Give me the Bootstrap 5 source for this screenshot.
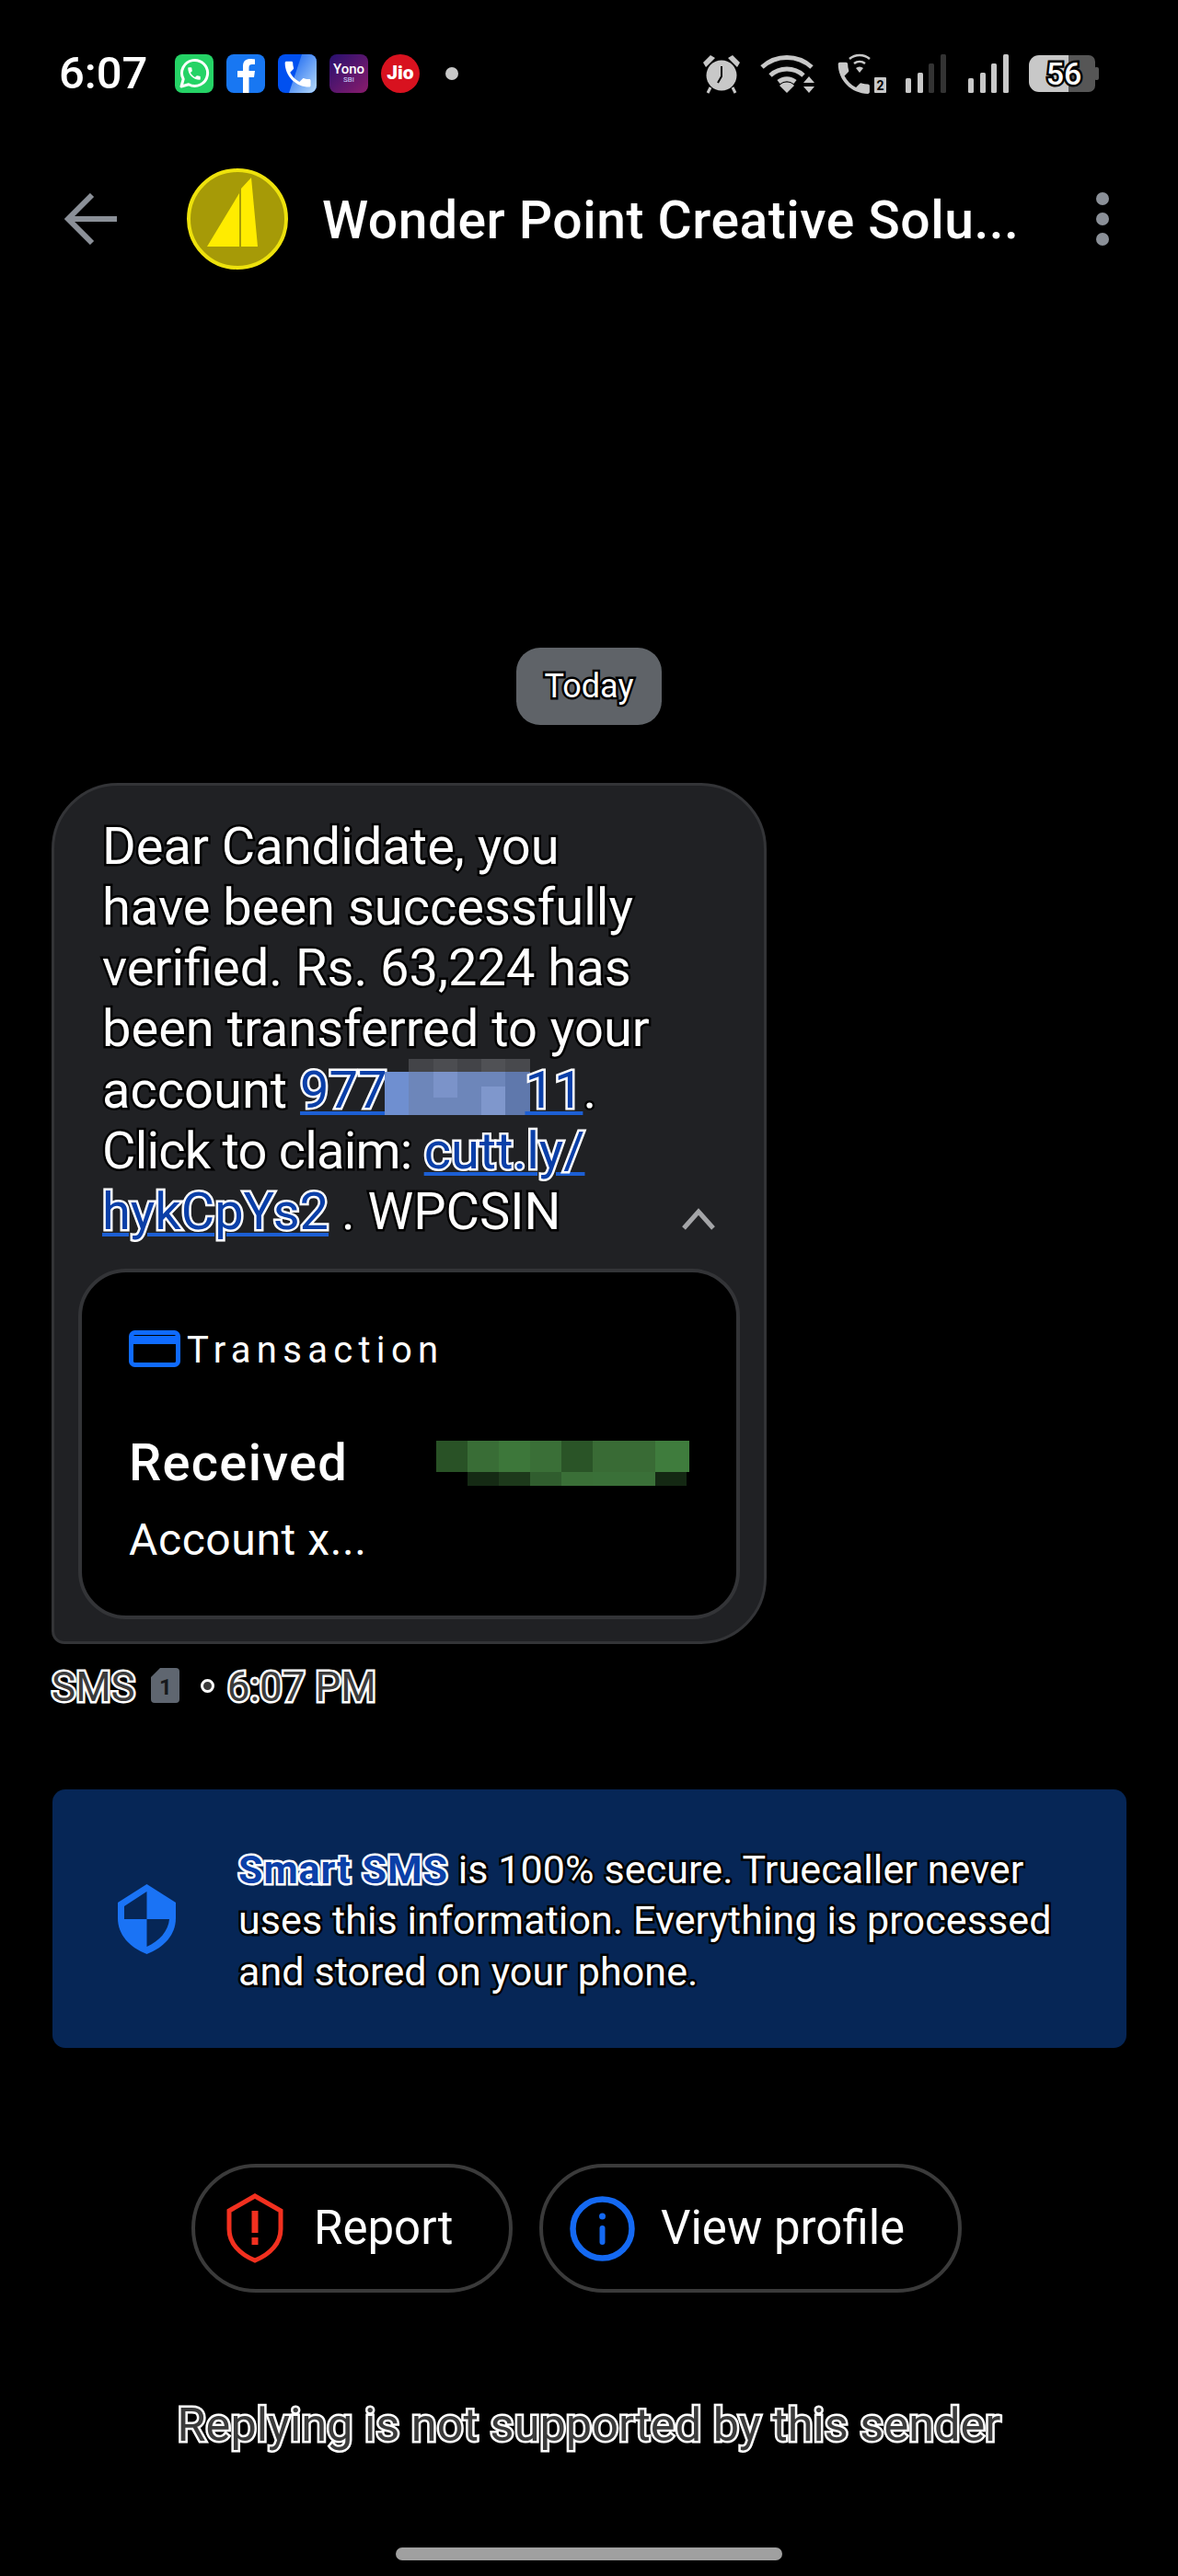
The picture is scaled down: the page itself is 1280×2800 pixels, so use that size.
<!DOCTYPE html>
<html lang="en">
<head>
<meta charset="UTF-8" />
<meta name="viewport" content="width=device-width, initial-scale=1.0" />
<title>Messages</title>
<link rel="stylesheet" href="https://cdn.jsdelivr.net/npm/bootstrap@5.3.0/dist/css/bootstrap.min.css" />
<style>
  body { background: #000; color: #fff; font-family: Roboto, "Liberation Sans", sans-serif; height: 2800px; overflow: hidden; }
  .hc-white { color: #fff; -webkit-text-stroke: 5px #000; paint-order: stroke fill; }
  .hc-ghost { color: #3b3b3b; -webkit-text-stroke: 5px #fff; paint-order: stroke fill; }
  .hc-link { color: #0a3fa8; -webkit-text-stroke: 5px #fff; paint-order: stroke fill; text-decoration: underline; text-decoration-color: #1c5fd4; text-decoration-thickness: 4px; text-underline-offset: 4px; }
  .hc-tight { letter-spacing: -.8px; }
  .smart-name { text-decoration: none; font-weight: 700; letter-spacing: .95px; }

  .status-row { margin-top: 58px; height: 43px; padding: 0 85px 0 64px; }
  .clock { font-size: 49px; font-weight: 500; line-height: 43px; width: 126px; }
  .app-ico { width: 42px; height: 42px; border-radius: 8px; margin-right: 14px; overflow: hidden; flex: none; }
  .ico-wa { background: #25d366; }
  .ico-fb { background: #1877f2; }
  .ico-tc { background: #0050f0; }
  .yono { background: linear-gradient(135deg, #27106f, #8a1c6c); line-height: 1; }
  .yono b { font-size: 15px; font-weight: 500; }
  .yono i { font-size: 8px; font-style: normal; color: #cfd8ff; }
  .jio { width: 42px; border-radius: 50%; background: #d8121f; font-size: 21px; font-weight: 900; margin-right: 28px; }
  .note-dot { width: 14px; height: 14px; background: #c8c8c8; border-radius: 50%; }
  .sys-icons { gap: 20px; }

  .top-bar { margin-top: 82px; height: 110px; padding-left: 70px; }
  .avatar { margin-left: 75px; }
  .top-title { font-size: 57px; font-weight: 500; margin: 3px 0 0 37px; width: 760px; letter-spacing: .5px; white-space: nowrap; }
  .kebab { gap: 8px; margin-left: 81px; }
  .kebab span { width: 14px; height: 14px; border-radius: 50%; background: #8b9098; }

  .today-pill { margin: 411px 0 0 561px; width: 158px; height: 84px; background: #5f6368; border-radius: 26px; font-size: 36px; }
  .bubble { margin: 63px 0 0 56px; width: 777px; height: 936px; background: #202124; border: 3px solid #333437; border-radius: 72px 72px 72px 14px; padding: 33px 26px 0; position: relative; }
  .bubble-text { font-size: 56px; line-height: 66px; padding-left: 26px; height: 462px; white-space: nowrap; }
  .pix-inline { vertical-align: -8px; margin: 0 -6px 0 -2px; }
  .fold { position: absolute; right: 53px; top: 459px; }
  .tx-card { margin-top: 30px; height: 381px; background: #000; border: 4px solid #333437; border-radius: 52px; padding: 61px 51px 0; }
  .tx-head { font-size: 40px; letter-spacing: 6.3px; gap: 7px; line-height: 40px; }
  .tx-head span { margin-top: 4px; }
  .tx-main { margin-top: 78px; height: 49px; }
  .tx-title { font-size: 56px; font-weight: 500; line-height: 49px; letter-spacing: 1.3px; }
  .tx-sub { font-size: 48px; margin-top: 31px; line-height: 56px; letter-spacing: .6px; }

  .meta-row { margin: 26px 0 0 56px; height: 38px; font-size: 44px; }
  .meta-row span { position: relative; top: 2px; }
  .sim-ico { margin: 0 23px 0 17px; }
  .meta-row .meta-dot { width: 15px; height: 15px; border: 3px solid #fff; border-radius: 50%; background: #3b3b3b; margin-right: 14px; top: 0; }

  .secure { margin: 94px 0 0 57px; width: 1167px; height: 281px; background: #062656; border-radius: 14px; padding-left: 71px; gap: 68px; }
  .secure-text { font-size: 43px; line-height: 55.5px; white-space: nowrap; letter-spacing: .1px; padding-top: 5px; }
  .shield-cut { fill: #062656; }

  .act-row { margin-top: 126px; padding-left: 208px; gap: 29px; }
  .act-btn { height: 140px; border: 4px solid #3a3a3a; border-radius: 70px; color: #fff; font-size: 51px; background: none; padding: 0; }
  .act-btn:hover { color: #fff; border-color: #3a3a3a; }
  .act-report { width: 349px; padding-left: 34px; gap: 33px; }
  .act-view { width: 459px; padding-left: 29px; gap: 28px; }

  .no-reply { margin-top: 116px; font-size: 50.5px; text-align: center; line-height: 56px; }
  .home-bar { margin: 105px 0 0 430px; width: 420px; height: 14px; border-radius: 7px; background: #a0a0a0; }
</style>
</head>
<body>
  <!-- status bar -->
  <div class="status-row d-flex align-items-center">
    <div class="clock">6:07</div>
    <div class="app-ico ico-wa d-flex align-items-center justify-content-center">
      <svg width="34" height="34" viewBox="0 0 34 34"><path d="M3 31l2.200-8A14 14 0 1 1 11 28.800z" fill="none" stroke="#fff" stroke-width="3" stroke-linejoin="round"/><path transform="translate(8 8) scale(.75)" d="M6.620 10.790c1.440 2.830 3.760 5.140 6.590 6.590l2.200-2.200c.27-.27.67-.36 1.020-.24 1.120.37 2.330.57 3.570.57.55 0 1 .45 1 1V20c0 .55-.45 1-1 1-9.390 0-17-7.610-17-17 0-.55.45-1 1-1h3.500c.55 0 1 .45 1 1 0 1.250.2 2.450.57 3.570.11.35.03.74-.25 1.020l-2.200 2.200z" fill="#fff"/></svg>
    </div>
    <div class="app-ico ico-fb">
      <svg width="42" height="42" viewBox="0 0 42 42"><path d="M18 42V25h-6v-7h6v-5c0-6 3.500-8 8-8 2 0 4 .3 5 .5V11h-3c-2.500 0-3.500 1-3.500 3.500V18H31l-1 7h-5.500v17z" fill="#fff"/></svg>
    </div>
    <div class="app-ico ico-tc">
      <svg width="42" height="42" viewBox="0 0 42 42"><defs><linearGradient id="tc" x1="0" y1="0" x2="1" y2="1"><stop offset="0" stop-color="#0b5cf0"/><stop offset="1" stop-color="#b9dcfa"/></linearGradient></defs><path d="M26 0h16v42H12z" fill="url(#tc)"/><path transform="translate(3 3) scale(1.550)" d="M6.620 10.790c1.440 2.830 3.760 5.140 6.590 6.590l2.200-2.200c.27-.27.67-.36 1.020-.24 1.120.37 2.330.57 3.570.57.55 0 1 .45 1 1V20c0 .55-.45 1-1 1-9.390 0-17-7.610-17-17 0-.55.45-1 1-1h3.500c.55 0 1 .45 1 1 0 1.250.2 2.450.57 3.570.11.35.03.74-.25 1.020l-2.200 2.200z" fill="#fff"/></svg>
    </div>
    <div class="app-ico yono d-flex flex-column align-items-center justify-content-center"><b>Yono</b><i>SBI</i></div>
    <div class="app-ico jio d-flex align-items-center justify-content-center">Jio</div>
    <div class="note-dot"></div>

    <div class="sys-icons d-flex align-items-center ms-auto">
      <svg width="44" height="44" viewBox="0 0 44 44"><circle cx="22" cy="24" r="16.500" fill="#c8c8c8"/><path d="M22 14v11l-4 7" fill="none" stroke="#000" stroke-width="2"/><path d="M2 10l8-8 5 3-10 10zM42 10l-8-8-5 3 10 10z" fill="#c8c8c8"/><path d="M10 37l-3 6M34 37l3 6" stroke="#c8c8c8" stroke-width="3"/></svg>
      <svg width="60" height="44" viewBox="0 0 60 44" fill="none" stroke="#c8c8c8" stroke-width="5"><path d="M2 15a40 40 0 0 1 54 0"/><path d="M11 24a27 27 0 0 1 36 0"/><path d="M20 31a14 14 0 0 1 18 0"/><path d="M29 43l-8-8a11 11 0 0 1 16 0z" fill="#c8c8c8" stroke="none"/><path d="M47 32l6-7 6 7zM47 36l6 7 6-7z" fill="#c8c8c8" stroke="none"/></svg>
      <svg width="58" height="44" viewBox="0 0 58 44"><path transform="translate(-1 4) scale(1.900)" d="M6.620 10.790c1.440 2.830 3.760 5.140 6.590 6.590l2.200-2.200c.27-.27.67-.36 1.020-.24 1.120.37 2.330.57 3.570.57.55 0 1 .45 1 1V20c0 .55-.45 1-1 1-9.390 0-17-7.610-17-17 0-.55.45-1 1-1h3.500c.55 0 1 .45 1 1 0 1.250.2 2.450.57 3.570.11.35.03.74-.25 1.020l-2.200 2.200z" fill="#c8c8c8"/><path d="M17 6a17 17 0 0 1 22 0M22 11a10 10 0 0 1 12 0" fill="none" stroke="#c8c8c8" stroke-width="2.500"/><path d="M28 21l-4-5a6 6 0 0 1 8 0z" fill="#c8c8c8"/><rect x="44" y="26" width="13" height="17" rx="1" fill="#c8c8c8"/><text x="50.500" y="40" font-size="14" font-weight="700" text-anchor="middle" fill="#000">2</text></svg>
      <svg width="44" height="44" viewBox="0 0 44 44"><rect x="0" y="27" width="6" height="16" rx="1.500" fill="#c8c8c8"/><rect x="13" y="21" width="6" height="22" rx="1.500" fill="#c8c8c8"/><rect x="25" y="11" width="6" height="32" rx="1.500" fill="#333"/><rect x="38" y="1" width="6" height="42" rx="1.500" fill="#333"/></svg>
      <svg class="ms-1" width="45" height="44" viewBox="0 0 45 44"><rect x="0" y="27" width="6" height="16" rx="1.500" fill="#c8c8c8"/><rect x="13" y="21" width="6" height="22" rx="1.500" fill="#c8c8c8"/><rect x="25" y="11" width="6" height="32" rx="1.500" fill="#c8c8c8"/><rect x="38" y="1" width="6" height="42" rx="1.500" fill="#c8c8c8"/></svg>
      <svg width="78" height="44" viewBox="0 0 78 44"><path d="M12 2h34v40H12A11 11 0 0 1 1 31V13A11 11 0 0 1 12 2z" fill="#c8c8c8"/><path d="M44 2h22a7 7 0 0 1 7 7v26a7 7 0 0 1-7 7H44z" fill="#565656"/><rect x="72" y="15" width="5" height="14" rx="2" fill="#565656"/><text x="39" y="34" font-size="34" font-weight="500" text-anchor="middle" fill="#fff" stroke="#000" stroke-width="5" paint-order="stroke fill">56</text></svg>
    </div>
  </div>

  <!-- sender header -->
  <div class="top-bar d-flex align-items-center">
    <svg width="58" height="56" viewBox="0 0 58 56" fill="none" stroke="#8b9098" stroke-width="6"><path d="M57 28H6M30 2L4 28l26 26"/></svg>
    <svg class="avatar" width="110" height="110" viewBox="0 0 110 110"><circle cx="55" cy="55" r="53" fill="#a69a07" stroke="#eee20c" stroke-width="4"/><path d="M22 85l35-58v58zM59 85V22l11-12 7 75z" fill="#ffec00"/></svg>
    <div class="top-title">Wonder Point Creative Solu...</div>
    <div class="kebab d-flex flex-column"><span></span><span></span><span></span></div>
  </div>

  <div class="today-pill d-flex align-items-center justify-content-center"><span class="hc-white">Today</span></div>

  <!-- message bubble -->
  <div class="bubble">
    <div class="bubble-text"><span class="hc-white">Dear Candidate, you<br />have been successfully<br />verified. Rs. 63,224 has<br />been transferred to your<br />account </span><span class="hc-link">977<svg class="pix-inline" width="158" height="61" viewBox="0 0 158 61"><rect y="14" width="158" height="47" fill="#6d86ba"/><rect x="26" y="0" width="27" height="14" fill="#434448"/><rect x="53" y="0" width="26" height="14" fill="#4c4d51"/><rect x="79" y="0" width="26" height="14" fill="#434448"/><rect x="105" y="0" width="26" height="14" fill="#505155"/><rect x="131" y="0" width="27" height="14" fill="#48494d"/><rect x="0" y="14" width="26" height="47" fill="#6f8fd0"/><rect x="53" y="14" width="26" height="28" fill="#7b93c9"/><rect x="105" y="30" width="26" height="31" fill="#7f97cc"/><rect x="131" y="14" width="27" height="47" fill="#5f78ac"/></svg>11</span><span class="hc-white">.<br /><span class="hc-tight">Click to claim: </span></span><span class="hc-link">cutt.ly/<br />hykCpYs2</span><span class="hc-white"> . WPCSIN</span></div>
    <svg class="fold" width="36" height="24" viewBox="0 0 36 24" fill="none" stroke="#a4a5a8" stroke-width="5"><path d="M2 22L18 4l16 18"/></svg>

    <div class="tx-card">
      <div class="tx-head d-flex align-items-center">
        <svg width="56" height="40" viewBox="0 0 56 40"><rect x="2.500" y="2.500" width="51" height="35" rx="4" fill="none" stroke="#0f6bff" stroke-width="5"/><rect x="2" y="6" width="52" height="9" fill="#0f6bff"/></svg>
        <span>Transaction</span>
      </div>
      <div class="tx-main d-flex justify-content-between">
        <div class="tx-title">Received</div>
        <svg width="275" height="49" viewBox="0 0 275 49"><rect width="34" height="34" fill="#295226"/><rect x="34" width="34" height="34" fill="#396d36"/><rect x="68" width="34" height="34" fill="#3d773a"/><rect x="102" width="34" height="34" fill="#3a6f37"/><rect x="136" width="34" height="34" fill="#2a5427"/><rect x="170" width="68" height="34" fill="#396b35"/><rect x="238" width="37" height="34" fill="#3f7c3d"/><rect x="34" y="34" width="34" height="15" fill="#152a14"/><rect x="68" y="34" width="34" height="15" fill="#1d391b"/><rect x="102" y="34" width="34" height="15" fill="#305d2e"/><rect x="136" y="34" width="34" height="15" fill="#3a6f37"/><rect x="170" y="34" width="68" height="15" fill="#3a7038"/><rect x="238" y="34" width="34" height="15" fill="#142813"/></svg>
      </div>
      <div class="tx-sub">Account x...</div>
    </div>
  </div>

  <div class="meta-row d-flex align-items-center">
    <span class="hc-ghost">SMS</span>
    <svg class="sim-ico" width="31" height="38" viewBox="0 0 31 38"><path d="M10 0h17a4 4 0 0 1 4 4v30a4 4 0 0 1-4 4H4a4 4 0 0 1-4-4V10z" fill="#5f6670"/><text x="16" y="29" font-size="24" font-weight="700" text-anchor="middle" fill="#17191c">1</text></svg>
    <span class="meta-dot"></span>
    <span class="hc-ghost">6:07 PM</span>
  </div>

  <!-- privacy note -->
  <div class="secure d-flex align-items-center">
    <svg width="63" height="76" viewBox="0 0 63 76"><path d="M31.500 0L63 20v17c0 18-13 32-31.500 39C13 69 0 55 0 37V20z" fill="#1a73f5"/><path class="shield-cut" d="M31.500 8v30H7V24zM31.500 38H56c-1 13-11 24-24.500 30z"/></svg>
    <div class="secure-text"><span class="hc-link smart-name">Smart SMS</span> <span class="hc-white">is 100% secure. Truecaller never<br />uses this information. Everything is processed<br />and stored on your phone.</span></div>
  </div>

  <!-- actions -->
  <div class="act-row d-flex">
    <button type="button" class="btn act-btn act-report d-flex align-items-center">
      <svg width="62" height="76" viewBox="0 0 62 76"><path d="M31 3L59 19v20c0 15-11 27-28 34C14 66 3 54 3 39V19z" fill="none" stroke="#f2301f" stroke-width="5"/><rect x="27.500" y="19" width="7" height="24" fill="#f2301f"/><rect x="27.500" y="48" width="7" height="8" fill="#f2301f"/></svg>
      <span>Report</span>
    </button>
    <button type="button" class="btn act-btn act-view d-flex align-items-center">
      <svg width="71" height="71" viewBox="0 0 71 71"><circle cx="35.500" cy="35.500" r="32" fill="none" stroke="#1469f2" stroke-width="6.500"/><circle cx="35.500" cy="22" r="3.500" fill="#1469f2"/><rect x="32.500" y="32" width="6" height="21" rx="3" fill="#1469f2"/></svg>
      <span>View profile</span>
    </button>
  </div>

  <div class="no-reply"><span class="hc-ghost">Replying is not supported by this sender</span></div>
  <div class="home-bar"></div>

  <script src="https://cdn.jsdelivr.net/npm/bootstrap@5.3.0/dist/js/bootstrap.bundle.min.js"></script>
</body>
</html>
